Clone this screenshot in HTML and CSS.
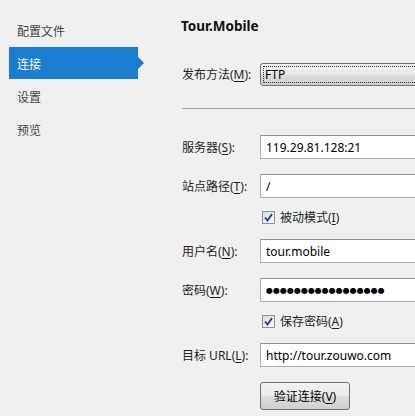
FILE: index.html
```html
<!DOCTYPE html>
<html lang="zh-CN">
<head>
<meta charset="utf-8">
<title>Tour.Mobile</title>
<link rel="stylesheet" href="styles.css">
</head>
<body>
<div class="app">
  <nav class="sidebar">
    <div class="nav-item">配置文件</div>
    <div class="nav-item active">连接</div>
    <div class="nav-item">设置</div>
    <div class="nav-item">预览</div>
  </nav>
  <main class="panel">
    <h1 class="title">Tour.Mobile</h1>
    <div class="row row-select">
      <span class="label">发布方法(<u>M</u>):</span>
      <div class="select"><span class="focus">FTP</span></div>
    </div>
    <div class="sep"></div>
    <div class="row row-first">
      <span class="label">服务器(<u>S</u>):</span>
      <div class="field">119.29.81.128:21</div>
    </div>
    <div class="row">
      <span class="label">站点路径(<u>T</u>):</span>
      <div class="field">/</div>
    </div>
    <div class="row check">
      <span class="label"></span>
      <span class="box"><svg width="9" height="9" viewBox="0 0 9 9"><path d="M1 4.5 L3.5 7.5 L8 1" fill="none" stroke="#27368a" stroke-width="1.8"/></svg></span>
      <span class="check-text">被动模式(<u>I</u>)</span>
    </div>
    <div class="row after-check">
      <span class="label">用户名(<u>N</u>):</span>
      <div class="field">tour.mobile</div>
    </div>
    <div class="row">
      <span class="label">密码(<u>W</u>):</span>
      <div class="field dots">●●●●●●●●●●●●●●●●●</div>
    </div>
    <div class="row check">
      <span class="label"></span>
      <span class="box"><svg width="9" height="9" viewBox="0 0 9 9"><path d="M1 4.5 L3.5 7.5 L8 1" fill="none" stroke="#27368a" stroke-width="1.8"/></svg></span>
      <span class="check-text">保存密码(<u>A</u>)</span>
    </div>
    <div class="row after-check">
      <span class="label">目标 URL(<u>L</u>):</span>
      <div class="field">http://tour.zouwo.com</div>
    </div>
    <div class="row row-button">
      <span class="label"></span>
      <div class="button">验证连接(<u>V</u>)</div>
    </div>
  </main>
</div>
</body>
</html>
```

FILE: styles.css
```css
html, body {
  margin: 0;
  padding: 0;
  background: #f0f0f0;
}
body {
  width: 415px;
  height: 416px;
  overflow: hidden;
  font-family: "Noto Sans", "Noto Sans CJK SC", sans-serif;
  font-size: 12px;
  color: #1e1e1e;
}
.app {
  display: flex;
  height: 416px;
}
.sidebar {
  width: 181px;
  flex: none;
  padding-top: 14px;
  display: flex;
  flex-direction: column;
  gap: 1px;
}
.nav-item {
  position: relative;
  width: 121px;
  height: 32px;
  margin-left: 9px;
  padding-left: 8px;
  display: flex;
  align-items: center;
  color: #444;
  font-family: "Noto Sans CJK SC", sans-serif;
}
.nav-item.active {
  background: #1a7dd0;
  color: #fff;
}
.nav-item.active::after {
  content: "";
  position: absolute;
  left: 129px;
  top: 10px;
  border-left: 6px solid #1a7dd0;
  border-top: 6px solid transparent;
  border-bottom: 6px solid transparent;
}
.panel {
  flex: 1;
  min-width: 0;
  padding-top: 17px;
  overflow: hidden;
}
.title {
  margin: 0;
  height: 18px;
  line-height: 18px;
  font-size: 13.5px;
  font-weight: bold;
  color: #111;
}
.row {
  display: flex;
  align-items: center;
  height: 24px;
  margin-top: 15px;
  white-space: nowrap;
}
.row-select {
  margin-top: 27px;
}
.row-first {
  margin-top: 26px;
}
.row.check {
  margin-top: 7px;
}
.row.after-check {
  margin-top: 10px;
}
.row-button {
  height: 28px;
  margin-top: 15px;
}
.label {
  width: 79px;
  flex: none;
  padding-left: 1px;
  box-sizing: border-box;
}
u {
  text-decoration-thickness: 1px;
  text-underline-offset: 2px;
}
.sep {
  height: 1px;
  background: #a0a0a0;
  margin-top: 22px;
  margin-left: 1px;
}
.select {
  flex: none;
  width: 200px;
  height: 23px;
  box-sizing: border-box;
  border: 1px solid #707070;
  border-radius: 3px;
  background: linear-gradient(#f2f2f2 0%, #ebebeb 48%, #dddddd 52%, #cfcfcf 100%);
  padding: 2px;
}
.focus {
  display: flex;
  align-items: center;
  height: 100%;
  box-sizing: border-box;
  border: 1px dotted #333;
  border-right: none;
  padding-left: 1px;
  color: #000;
}
.field {
  flex: none;
  width: 200px;
  height: 24px;
  box-sizing: border-box;
  border: 1px solid #abadb3;
  border-top-color: #8f949e;
  background: #fff;
  padding-left: 5px;
  display: flex;
  align-items: center;
  color: #000;
}
.dots {
  font-size: 8px;
  letter-spacing: 0;
  font-family: "DejaVu Sans", sans-serif;
}
.box {
  flex: none;
  width: 13px;
  height: 13px;
  box-sizing: border-box;
  margin-left: 2px;
  border: 1px solid #8e8f8f;
  background: linear-gradient(135deg, #dcdcdc, #fbfbfb);
  display: flex;
  align-items: center;
  justify-content: center;
}
.check-text {
  margin-left: 5px;
}
.button {
  flex: none;
  width: 90px;
  height: 28px;
  box-sizing: border-box;
  border: 1px solid #707070;
  border-radius: 3px;
  background: linear-gradient(#f2f2f2 0%, #ebebeb 48%, #dddddd 52%, #cfcfcf 100%);
  display: flex;
  align-items: center;
  justify-content: center;
  color: #000;
}
```
